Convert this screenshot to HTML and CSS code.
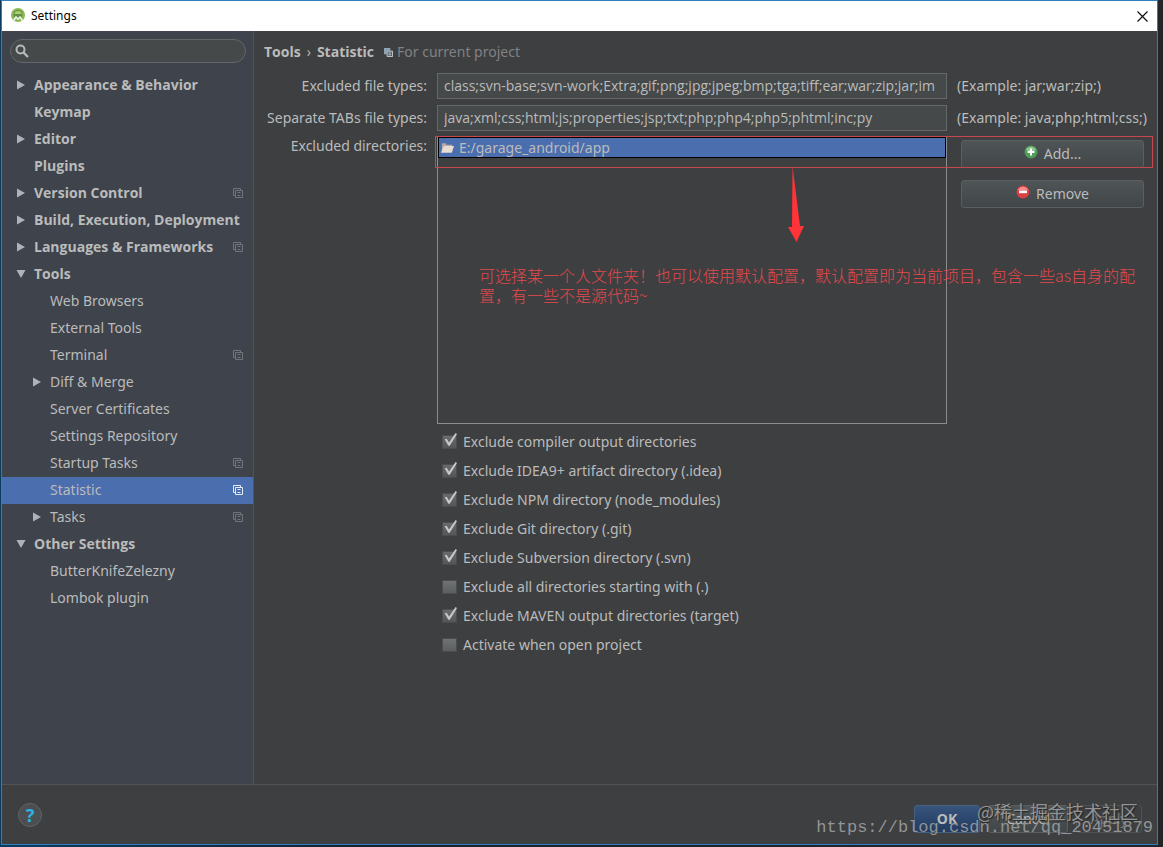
FILE: index.html
```html
<!DOCTYPE html>
<html lang="en">
<head>
<meta charset="utf-8">
<title>Settings</title>
<link rel="stylesheet" href="styles.css">
</head>
<body>
<svg class="defs" width="0" height="0" aria-hidden="true">
  <symbol id="scope" viewBox="0 0 10 10"><path d="M2.5 7.5h-2v-7h7v2M2.5 2.5h7v7h-7zM4.5 4.5h3M4.5 7.5h3" fill="none" stroke="currentColor"/></symbol>
  <symbol id="right" viewBox="0 0 10 10"><path d="M1 .5 9 5 1 9.500z" fill="currentColor"/></symbol>
  <symbol id="down" viewBox="0 0 10 10"><path d="M.5 1h9L5 9z" fill="currentColor"/></symbol>
</svg>
<div class="window">
  <header class="titlebar">
    <svg class="logo" viewBox="0 0 16 16" aria-hidden="true"><circle cx="8" cy="7" r="7" fill="#8bb854"/><circle cx="8" cy="6.500" r="4.500" fill="#5f8f45"/><path d="M4.500 6a3.500 3 0 0 1 7 0z" fill="#a9d06c"/><path d="M3 13.500 6 9l2 2 2-2 3 4.500" fill="none" stroke="#eef3ea" stroke-width="1.600"/></svg>
    <span class="title">Settings</span>
    <button class="close" aria-label="Close"><svg viewBox="0 0 11 11"><path d="m.5.5 10 10m0-10-10 10" stroke="#111" stroke-width="1.200"/></svg></button>
  </header>
  <div class="body">
    <aside class="sidebar">
      <label class="search">
        <svg viewBox="0 0 14 14" aria-hidden="true"><circle cx="5.500" cy="5.500" r="4" fill="none" stroke="#b6b9bc" stroke-width="2"/><path d="m8.500 8.500 4.500 4.500" stroke="#b6b9bc" stroke-width="2.400"/></svg>
        <input type="text" aria-label="Search settings">
      </label>
      <nav class="tree">
        <a class="item group" href="#"><svg class="arrow"><use href="#right"/></svg><span>Appearance &amp; Behavior</span></a>
        <a class="item group" href="#"><i class="arrow"></i><span>Keymap</span></a>
        <a class="item group" href="#"><svg class="arrow"><use href="#right"/></svg><span>Editor</span></a>
        <a class="item group" href="#"><i class="arrow"></i><span>Plugins</span></a>
        <a class="item group" href="#"><svg class="arrow"><use href="#right"/></svg><span>Version Control</span><svg class="scope"><use href="#scope"/></svg></a>
        <a class="item group" href="#"><svg class="arrow"><use href="#right"/></svg><span>Build, Execution, Deployment</span></a>
        <a class="item group" href="#"><svg class="arrow"><use href="#right"/></svg><span>Languages &amp; Frameworks</span><svg class="scope"><use href="#scope"/></svg></a>
        <a class="item group" href="#"><svg class="arrow"><use href="#down"/></svg><span>Tools</span></a>
        <a class="item child" href="#"><i class="arrow"></i><span>Web Browsers</span></a>
        <a class="item child" href="#"><i class="arrow"></i><span>External Tools</span></a>
        <a class="item child" href="#"><i class="arrow"></i><span>Terminal</span><svg class="scope"><use href="#scope"/></svg></a>
        <a class="item child" href="#"><svg class="arrow"><use href="#right"/></svg><span>Diff &amp; Merge</span></a>
        <a class="item child" href="#"><i class="arrow"></i><span>Server Certificates</span></a>
        <a class="item child" href="#"><i class="arrow"></i><span>Settings Repository</span></a>
        <a class="item child" href="#"><i class="arrow"></i><span>Startup Tasks</span><svg class="scope"><use href="#scope"/></svg></a>
        <a class="item child selected" href="#"><i class="arrow"></i><span>Statistic</span><svg class="scope"><use href="#scope"/></svg></a>
        <a class="item child" href="#"><svg class="arrow"><use href="#right"/></svg><span>Tasks</span><svg class="scope"><use href="#scope"/></svg></a>
        <a class="item group" href="#"><svg class="arrow"><use href="#down"/></svg><span>Other Settings</span></a>
        <a class="item child" href="#"><i class="arrow"></i><span>ButterKnifeZelezny</span></a>
        <a class="item child" href="#"><i class="arrow"></i><span>Lombok plugin</span></a>
      </nav>
    </aside>
    <main class="panel">
      <h1 class="crumbs"><span>Tools</span><span class="sep">›</span><span>Statistic</span>
        <svg class="project" viewBox="0 0 10 10" aria-hidden="true"><path d="M0 0h7v3H3v4H0z" fill="#8fa5b5"/><path d="M3.500 3.500h6v6h-6z" fill="#4d5963" stroke="#d0d6da"/><path d="M5 5.500h3M5 7.500h3" stroke="#d0d6da"/></svg>
        <span class="hint">For current project</span></h1>
      <div class="form">
        <label class="name" for="excluded">Excluded file types:</label>
        <input class="field" id="excluded" type="text" value="class;svn-base;svn-work;Extra;gif;png;jpg;jpeg;bmp;tga;tiff;ear;war;zip;jar;im">
        <span class="example">(Example: jar;war;zip;)</span>
        <label class="name" for="tabs">Separate TABs file types:</label>
        <input class="field" id="tabs" type="text" value="java;xml;css;html;js;properties;jsp;txt;php;php4;php5;phtml;inc;py">
        <span class="example">(Example: java;php;html;css;)</span>
        <span class="name top" id="dirs">Excluded directories:</span>
        <div class="list" role="listbox" aria-labelledby="dirs">
          <div class="row" role="option" aria-selected="true">
            <svg viewBox="0 0 16 13" aria-hidden="true"><path d="M2 11V2h4l1 1.500h6V11z" fill="#b5aba3"/><path d="M1 12 4 5h11l-2.500 7z" fill="#e8ddd2"/></svg>
            <span>E:/garage_android/app</span>
          </div>
        </div>
        <div class="actions">
          <button class="btn"><svg viewBox="0 0 14 14" aria-hidden="true"><circle cx="7" cy="7" r="6.500" fill="#4f9b58"/><path d="M2 5a5.500 5.500 0 0 1 10 0q-5 3-10 0" fill="#8cc792"/><path d="M7 3.500v7M3.500 7h7" stroke="#fff" stroke-width="2"/></svg>Add...</button>
          <button class="btn"><svg viewBox="0 0 14 14" aria-hidden="true"><circle cx="7" cy="7" r="6.500" fill="#d93f43"/><path d="M2 5a5.500 5.500 0 0 1 10 0q-5 3-10 0" fill="#f08d8e"/><path d="M3 7h8" stroke="#fff" stroke-width="2.400"/></svg>Remove</button>
        </div>
        <div class="callout"></div>
        <svg class="pointer" viewBox="0 0 16 76" aria-hidden="true"><path d="M4.500 0 12 60h4L8.500 76 0 61h4z" fill="#ff3338"/></svg>
        <p class="note" lang="zh">可选择某一个人文件夹！也可以使用默认配置，默认配置即为当前项目，包含一些as自身的配<br>置，有一些不是源代码~</p>
        <div class="checks">
          <label><input type="checkbox" checked>Exclude compiler output directories</label>
          <label><input type="checkbox" checked>Exclude IDEA9+ artifact directory (.idea)</label>
          <label><input type="checkbox" checked>Exclude NPM directory (node_modules)</label>
          <label><input type="checkbox" checked>Exclude Git directory (.git)</label>
          <label><input type="checkbox" checked>Exclude Subversion directory (.svn)</label>
          <label><input type="checkbox">Exclude all directories starting with (.)</label>
          <label><input type="checkbox" checked>Exclude MAVEN output directories (target)</label>
          <label><input type="checkbox">Activate when open project</label>
        </div>
      </div>
    </main>
  </div>
  <footer class="footer">
    <button class="help" aria-label="Help">?</button>
    <div class="buttons">
      <button class="btn primary">OK</button>
      <button class="btn cancel">Cancel</button>
      <button class="btn" disabled>Apply</button>
    </div>
  </footer>
</div>
<div class="mark community" lang="zh">@稀土掘金技术社区</div>
<div class="mark url">https://blog.csdn.net/qq_20451879</div>
</body>
</html>
```
FILE: styles.css
```css
* { box-sizing: border-box; }

body {
  margin: 0;
  height: 100vh;
  padding: 0 5px 2px 1px;
  display: flex;
  background: linear-gradient(90deg, #0b3c60 0, #17222e 30%, #242528 95%);
  color: #bbbbbb;
  font: 14px/20px "Noto Sans", "Open Sans", sans-serif;
  position: relative;
  overflow: hidden;
}

.defs { position: absolute; }
button, input { font: inherit; color: inherit; }

.window {
  flex: 1;
  min-width: 0;
  display: flex;
  flex-direction: column;
  border: 1px solid #2f7fc0;
  background: #3d3f41;
}

.titlebar {
  height: 30px;
  flex: none;
  display: flex;
  align-items: center;
  gap: 5px;
  padding: 0 9px 0 8px;
  background: #fff;
  color: #000;
  font-size: 12px;
}
.logo { width: 16px; height: 16px; }
.title { flex: 1; }
.close { display: flex; padding: 0; border: 0; background: none; }
.close svg { width: 11px; height: 11px; }

.body { flex: 1; min-height: 0; display: flex; }

.sidebar {
  width: 252px;
  flex: none;
  background: #3e434c;
  border-right: 1px solid #515558;
  padding-top: 8px;
}
.search {
  display: flex;
  align-items: center;
  gap: 6px;
  height: 24px;
  margin: 0 7px 9px 8px;
  padding: 0 4px;
  border: 1px solid #646869;
  border-radius: 12px;
  background: #45494a;
}
.search svg { width: 14px; height: 14px; flex: none; }
.search input { flex: 1; min-width: 0; border: 0; outline: 0; background: none; }

.item {
  display: flex;
  align-items: center;
  gap: 8px;
  height: 27px;
  padding: 0 10px 2px 14px;
  color: inherit;
  text-decoration: none;
  white-space: nowrap;
}
.group { font-family: "Open Sans", sans-serif; font-weight: 700; }
.child { padding-left: 30px; }
.arrow { width: 10px; height: 10px; flex: none; color: #afb3b8; }
.scope { width: 10px; height: 10px; flex: none; margin-left: auto; color: #70757c; }
.selected { background: #4b6eaf; }
.selected .scope { color: #e4ebf5; }

.panel { flex: 1; min-width: 0; padding: 11px 10px; }
.crumbs {
  display: flex;
  align-items: center;
  margin: 0 0 11px;
  font: 700 14px/20px "Open Sans", sans-serif;
}
.sep { margin: 0 6px; font-weight: 400; }
.project { width: 9px; height: 9px; margin: 0 4px 0 10px; }
.hint { color: #808284; font-family: "Noto Sans", sans-serif; font-weight: 400; }

.form {
  position: relative;
  display: grid;
  grid-template-columns: 163px minmax(0, 1fr) 190px;
  gap: 6px 10px;
  align-items: center;
}
.name { justify-self: end; white-space: nowrap; }
.top { align-self: start; margin-top: -1px; }
.field {
  width: 100%;
  height: 26px;
  padding: 0 5px 1px 6px;
  border: 1px solid #646869;
  outline: 0;
  background: #45494a;
  font-family: "Open Sans", sans-serif;
}
.example { white-space: nowrap; }

.list { height: 287px; border: 1px solid #8a8c8d; }
.row {
  display: flex;
  align-items: center;
  gap: 4px;
  height: 21px;
  margin-top: -1px;
  padding: 0 1px;
  border: 1px solid #000;
  background: #4b6eaf;
}
.row svg { width: 15px; height: 13px; }

.actions {
  align-self: start;
  display: flex;
  flex-direction: column;
  gap: 12px;
  padding: 3px 3px 0 4px;
}
.btn {
  display: flex;
  align-items: center;
  justify-content: center;
  gap: 6px;
  height: 28px;
  border: 1px solid #5b5f61;
  border-radius: 3px;
  background: linear-gradient(#4f5456, #414648);
}
.btn svg { width: 14px; height: 14px; margin-bottom: 4px; }

.callout {
  position: absolute;
  top: 63px;
  left: 171px;
  right: -6px;
  height: 32px;
  border: 1px solid #c9474c;
}
.pointer { position: absolute; top: 93px; left: 524px; width: 16px; height: 76px; }
.note {
  position: absolute;
  top: 192px;
  left: 215px;
  margin: 0;
  color: #e5484c;
  font: 300 16px/20px "Noto Sans CJK SC", sans-serif;
  white-space: nowrap;
}

.checks {
  grid-column: 2;
  display: flex;
  flex-direction: column;
  margin-top: -3px;
  padding-left: 5px;
}
.checks label { display: flex; align-items: center; gap: 6px; height: 29px; white-space: nowrap; }
.checks input {
  appearance: none;
  position: relative;
  width: 15px;
  height: 14px;
  margin: 0;
  border: 1px solid #4b4e50;
  background: linear-gradient(#707374, #5c5f60);
}
.checks input:checked { background: linear-gradient(#686b6d, #545758); }
.checks input:checked::after {
  content: "";
  position: absolute;
  inset: -3px -1px 1px 0;
  background: #c8c8c8;
  clip-path: polygon(12% 48%, 26% 44%, 43% 72%, 90% 4%, 100% 10%, 48% 94%, 38% 94%);
}

.footer {
  flex: none;
  display: flex;
  align-items: center;
  justify-content: space-between;
  height: 60px;
  padding: 0 15px 0 16px;
  border-top: 1px solid #515456;
}
.buttons { display: flex; gap: 8px; padding-top: 8px; }
.buttons .btn { min-width: 66px; padding: 0 8px; }
.buttons .cancel { min-width: 80px; }
.buttons .primary {
  border-color: #44617f;
  background: linear-gradient(#37547c, #223b61);
  font-weight: 700;
}
.buttons .btn:disabled { color: #777; background: none; border-color: #505355; }
.help {
  width: 24px;
  height: 24px;
  padding: 0;
  border: 1px solid #606365;
  border-radius: 12px;
  background: #4c4f51;
  color: #29b2e4;
  font-size: 18px;
  font-weight: 700;
  line-height: 20px;
}

.mark { position: absolute; white-space: nowrap; pointer-events: none; color: #929495; }
.community {
  right: 25px;
  bottom: 24px;
  font: 18px/24px "Noto Sans CJK SC", sans-serif;
  text-shadow: 1px 1px 1px #222;
}
.url { right: 10px; bottom: 8px; font: 17px/22px "Liberation Mono", monospace; }
```
